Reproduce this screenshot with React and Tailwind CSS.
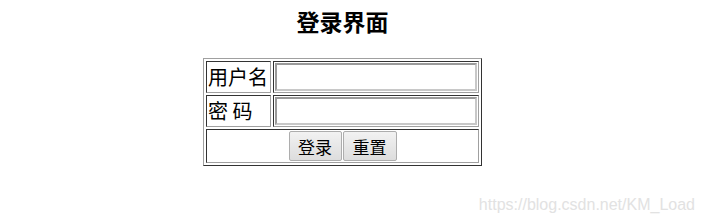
const App = () => {
  return (
    <div className="relative w-[703px] h-[224px] bg-white overflow-hidden" style={{ fontFamily: '"Noto Sans CJK SC", "Liberation Sans", sans-serif' }}>
      <div className="flex flex-col items-center w-[685px]">
        <h2 className="mt-[6px] text-[23px] leading-[30px] font-bold text-black">登录界面</h2>
        <table className="mt-[22px] border-separate border-spacing-[2px] border border-t-[#a0a0a0] border-l-[#a0a0a0] border-r-[#333] border-b-[#333]">
          <tbody>
            <tr>
              <td className="w-[65px] h-[32px] p-0 px-[1px] text-[20px] leading-none text-black border border-t-[#333] border-l-[#333] border-r-[#a0a0a0] border-b-[#a0a0a0]">用户名</td>
              <td className="w-[206px] h-[32px] p-[1px] border border-t-[#333] border-l-[#333] border-r-[#a0a0a0] border-b-[#a0a0a0]">
                <input type="text" className="block w-[202px] h-[28px] bg-white border-2 border-t-[#9a9a9a] border-l-[#9a9a9a] border-r-[#c8c8c8] border-b-[#c8c8c8] outline-none" />
              </td>
            </tr>
            <tr>
              <td className="w-[65px] h-[32px] p-0 px-[1px] text-[20px] leading-none text-black border border-t-[#333] border-l-[#333] border-r-[#a0a0a0] border-b-[#a0a0a0] whitespace-pre">密 码</td>
              <td className="w-[206px] h-[32px] p-[1px] border border-t-[#333] border-l-[#333] border-r-[#a0a0a0] border-b-[#a0a0a0]">
                <input type="password" className="block w-[202px] h-[28px] bg-white border-2 border-t-[#9a9a9a] border-l-[#9a9a9a] border-r-[#c8c8c8] border-b-[#c8c8c8] outline-none" />
              </td>
            </tr>
            <tr>
              <td colSpan={2} className="h-[34px] p-[1px] border border-t-[#333] border-l-[#333] border-r-[#a0a0a0] border-b-[#a0a0a0]">
                <div className="flex justify-center gap-[1px]">
                  <button className="w-[53px] h-[30px] text-[17px] leading-none text-black border border-[#adadad] rounded-[2px] bg-gradient-to-b from-[#f2f2f2] to-[#dddddd]">登录</button>
                  <button className="w-[54px] h-[30px] text-[17px] leading-none text-black border border-[#adadad] rounded-[2px] bg-gradient-to-b from-[#f2f2f2] to-[#dddddd]">重置</button>
                </div>
              </td>
            </tr>
          </tbody>
        </table>
      </div>
      <span className="absolute right-[8px] top-[196px] text-[16px] leading-[18px] text-[#e2e2e2]" style={{ fontFamily: '"Liberation Sans", Arial, sans-serif' }}>https://blog.csdn.net/KM_Load</span>
    </div>
  );
};

export default App;
